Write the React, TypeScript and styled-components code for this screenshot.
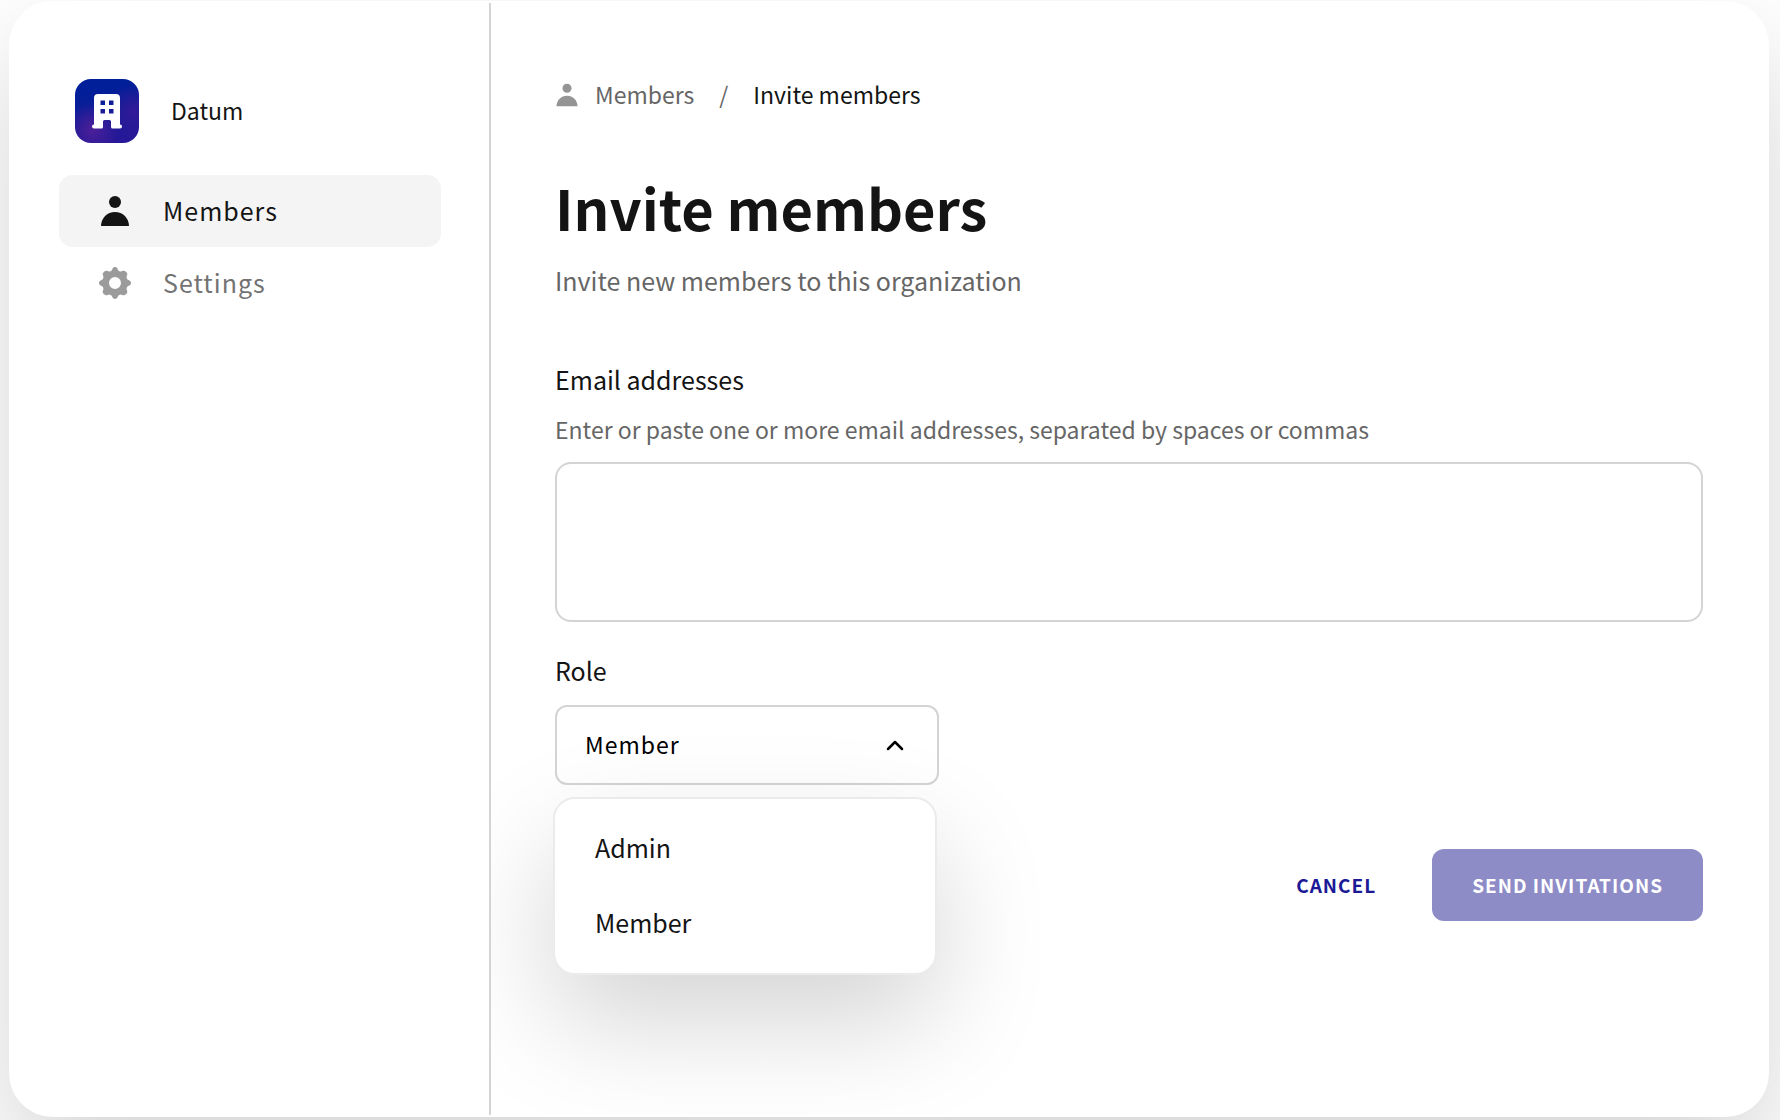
import React, { useState } from "react";
import styled, { createGlobalStyle } from "styled-components";

const ink = "#141414";
const muted = "#666666";
const line = "#d4d4d4";
const brand = "#1b1996";
const floating = "0 48px 112px rgba(0, 0, 0, 0.17)";

const GlobalStyle = createGlobalStyle`
  *, *::before, *::after { box-sizing: border-box; }
  body {
    margin: 0;
    background: #ffffff;
    color: ${ink};
    font-family: "Noto Sans CJK SC", "Noto Sans", sans-serif;
    font-size: 25px;
    line-height: 32px;
  }
  button, select, textarea { font: inherit; color: inherit; }
`;

const Page = styled.div`
  display: flex;
  min-height: 100vh;
  padding: 1px 11px 3px 9px;
  overflow: hidden;
`;

const Card = styled.div`
  display: flex;
  flex: 1;
  padding: 2px;
  border-radius: 44px;
  background: #ffffff;
  box-shadow: ${floating};
`;

const Sidebar = styled.aside`
  flex: none;
  width: 480px;
  padding: 76px 48px;
  border-right: 2px solid ${line};
`;

const RowText = styled.span`
  padding-bottom: 2px;
`;

const Organization = styled.div`
  display: flex;
  align-items: center;
  gap: 32px;
  margin-bottom: 32px;
  padding-left: 16px;
  font-size: 23px;
`;

const OrganizationTile = styled.span`
  display: flex;
  align-items: center;
  justify-content: center;
  width: 64px;
  height: 64px;
  border-radius: 16px;
  background:
    radial-gradient(circle at 28% 78%, #4e1f98 0%, rgba(78, 31, 152, 0) 38%),
    radial-gradient(circle at 92% 52%, #331a98 0%, rgba(51, 26, 152, 0) 42%),
    linear-gradient(170deg, #001f98 20%, #261898 90%);
`;

const NavLink = styled.a<{ $active?: boolean }>`
  display: flex;
  align-items: center;
  gap: 32px;
  height: 72px;
  padding: 0 40px;
  border-radius: 14px;
  background: ${(p) => (p.$active ? "#f4f4f4" : "transparent")};
  color: ${(p) => (p.$active ? ink : "#737373")};
  letter-spacing: 1px;
  text-decoration: none;

  svg { color: ${(p) => (p.$active ? ink : "#9b9b9b")}; }
`;

const Main = styled.main`
  flex: 1;
  min-width: 0;
  padding: 76px 64px;
  border-radius: 0 42px 42px 0;
  overflow: hidden;
`;

const Breadcrumb = styled.nav`
  display: flex;
  align-items: center;
  gap: 25px;
  height: 32px;
  font-size: 23px;
  color: ${muted};
`;

const Crumb = styled.a`
  display: flex;
  align-items: center;
  gap: 16px;
  color: inherit;
  text-decoration: none;

  svg { color: #949494; }
`;

const CurrentCrumb = styled(RowText)`
  color: ${ink};
`;

const Title = styled.h1`
  margin: 60px 0 0;
  font-size: 56px;
  font-weight: 700;
  line-height: 72px;
`;

const Subtitle = styled.p`
  margin: 21px 0 0;
  color: ${muted};
`;

const Form = styled.form`
  margin-top: 67px;
`;

const Label = styled.label`
  display: block;
`;

const Help = styled.p`
  margin: 18px 0 0;
  font-size: 23px;
  color: ${muted};
`;

const EmailBox = styled.textarea`
  display: block;
  width: 100%;
  height: 160px;
  margin: 17px 0 32px;
  padding: 24px 28px;
  border: 2px solid ${line};
  border-radius: 16px;
  background: #ffffff;
  outline: none;
  resize: none;
`;

const Picker = styled.div`
  position: relative;
  width: 384px;
  margin-top: 19px;
`;

const RoleSelect = styled.select`
  display: block;
  width: 100%;
  height: 80px;
  padding: 0 28px 2px;
  border: 2px solid ${line};
  border-radius: 12px;
  background: transparent;
  color: #000000;
  font-size: 23px;
  letter-spacing: 1px;
  outline: none;
  appearance: none;
`;

const PickerArrow = styled.svg`
  position: absolute;
  top: 28px;
  right: 32px;
  pointer-events: none;
`;

const Menu = styled.ul`
  position: absolute;
  top: calc(100% + 12px);
  left: -2px;
  width: 100%;
  margin: 0;
  padding: 12px 0;
  border: 2px solid #ebebeb;
  border-radius: 22px;
  background: #ffffff;
  box-shadow: ${floating};
  list-style: none;
`;

const MenuItem = styled.li`
  padding: 20px 40px 23px;
  cursor: pointer;
`;

const Actions = styled.div`
  display: flex;
  justify-content: flex-end;
  gap: 16px;
  margin-top: 64px;
`;

const Button = styled.button<{ $primary?: boolean }>`
  height: 72px;
  padding: 0 40px;
  border: 0;
  border-radius: 12px;
  background: ${(p) => (p.$primary ? "#8d8cc7" : "transparent")};
  color: ${(p) => (p.$primary ? "#ffffff" : brand)};
  font-size: 19px;
  font-weight: 700;
  letter-spacing: 1px;
  text-transform: uppercase;
`;

const PersonIcon = ({ size }: { size: number }) => (
  <svg width={size} height={size} viewBox="0 0 32 32" fill="currentColor" aria-hidden="true">
    <circle cx="16" cy="7" r="6" />
    <path d="M2 31C2 23.2 8.2 17 16 17s14 6.200 14 14z" />
  </svg>
);

const GearIcon = () => (
  <svg width="32" height="32" viewBox="-16 -16 32 32" fill="currentColor" aria-hidden="true">
    <circle r="9.300" fill="none" stroke="currentColor" strokeWidth="6.600" />
    {[0, 90, 180, 270].map((angle) => (
      <g key={angle} transform={`rotate(${angle})`}>
        <path d="M-5-11.500C-3.600-12-3-13-2.500-14.300-2-15.500-1-16 0-16s2 .5 2.500 1.700C3-13 3.600-12 5-11.500z" />
        <path
          transform="rotate(45)"
          d="M-5-11.500C-3.800-12-3.500-13-3-14.200-2.600-15.300-1.500-15.700 0-15.700s2.600.4 3 1.500C3.500-13 3.800-12 5-11.500z"
        />
      </g>
    ))}
  </svg>
);

const BuildingIcon = () => (
  <svg width="30" height="35" viewBox="0 0 30 35" aria-hidden="true">
    <path
      fill="#ffffff"
      fillRule="evenodd"
      d="M6 0h18a4 4 0 0 1 4 4v26.500a2 2 0 0 1 0 4h-7.500a1.500 1.500 0 0 1-1.500-1.500v-5.500a1.500 1.500 0 0 0-1.500-1.500h-5a1.500 1.500 0 0 0-1.500 1.500V33a1.500 1.500 0 0 1-1.500 1.500H2a2 2 0 0 1 0-4V4a4 4 0 0 1 4-4zM8.500 6.500v4.500H13V6.500zM17 6.500v4.500h4.500V6.500zM8.500 15v4.500H13V15zM17 15v4.500h4.500V15z"
    />
  </svg>
);

const roles = ["Admin", "Member"];

export default function App() {
  const [role, setRole] = useState("Member");
  const [emails, setEmails] = useState("");

  return (
    <>
      <GlobalStyle />
      <Page>
        <Card>
          <Sidebar>
            <Organization>
              <OrganizationTile>
                <BuildingIcon />
              </OrganizationTile>
              <RowText>Datum</RowText>
            </Organization>
            <nav aria-label="Organization">
              <NavLink href="#members" $active aria-current="page">
                <PersonIcon size={32} />
                <RowText>Members</RowText>
              </NavLink>
              <NavLink href="#settings">
                <GearIcon />
                <RowText>Settings</RowText>
              </NavLink>
            </nav>
          </Sidebar>
          <Main>
            <Breadcrumb aria-label="Breadcrumb">
              <Crumb href="#members">
                <PersonIcon size={24} />
                <RowText>Members</RowText>
              </Crumb>
              <RowText>/</RowText>
              <CurrentCrumb>Invite members</CurrentCrumb>
            </Breadcrumb>
            <Title>Invite members</Title>
            <Subtitle>Invite new members to this organization</Subtitle>
            <Form onSubmit={(e) => e.preventDefault()}>
              <Label htmlFor="emails">Email addresses</Label>
              <Help id="emails-help">
                Enter or paste one or more email addresses, separated by spaces or commas
              </Help>
              <EmailBox
                id="emails"
                aria-describedby="emails-help"
                value={emails}
                onChange={(e) => setEmails(e.target.value)}
              />
              <Label htmlFor="role">Role</Label>
              <Picker>
                <RoleSelect id="role" value={role} onChange={(e) => setRole(e.target.value)}>
                  {roles.map((name) => (
                    <option key={name}>{name}</option>
                  ))}
                </RoleSelect>
                <PickerArrow width="24" height="24" viewBox="0 0 24 24" fill="none" aria-hidden="true">
                  <path d="M5 16l7-7 7 7" stroke="#000000" strokeWidth="2.500" strokeLinecap="round" strokeLinejoin="round" />
                </PickerArrow>
                <Menu role="listbox" aria-label="Role">
                  {roles.map((name) => (
                    <MenuItem key={name} role="option" aria-selected={name === role} onClick={() => setRole(name)}>
                      {name}
                    </MenuItem>
                  ))}
                </Menu>
              </Picker>
              <Actions>
                <Button type="button">Cancel</Button>
                <Button type="submit" $primary disabled={!emails}>
                  Send invitations
                </Button>
              </Actions>
            </Form>
          </Main>
        </Card>
      </Page>
    </>
  );
}
